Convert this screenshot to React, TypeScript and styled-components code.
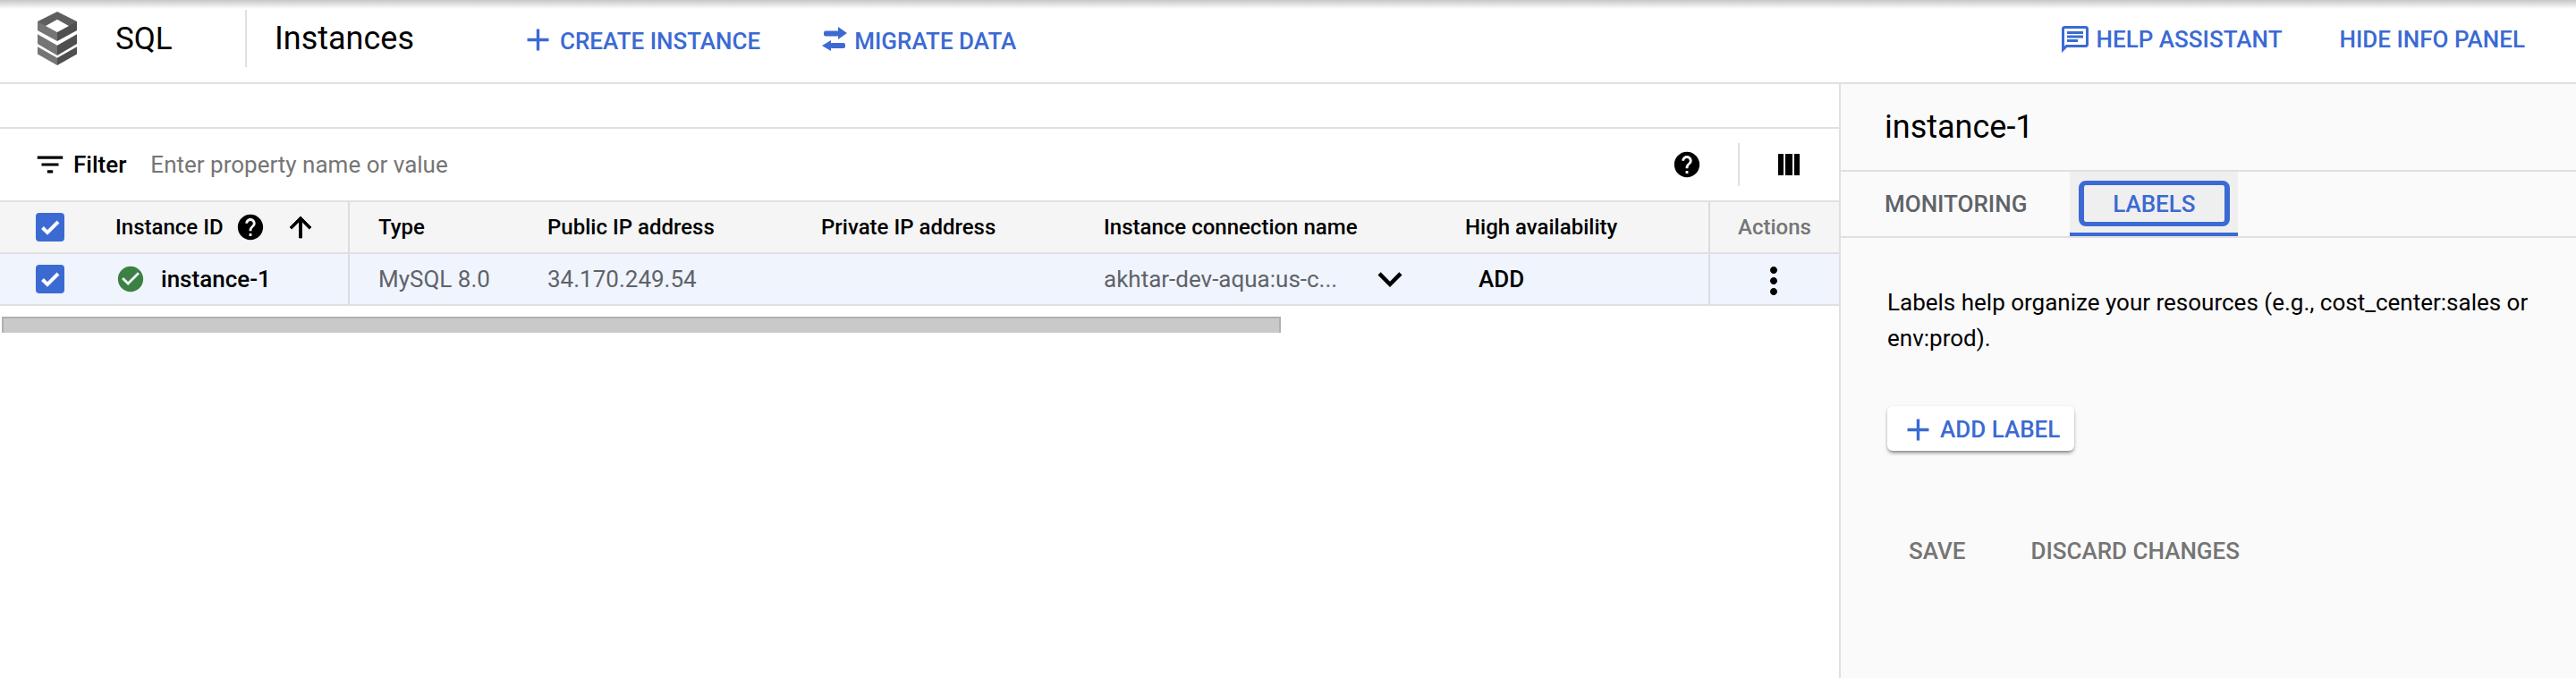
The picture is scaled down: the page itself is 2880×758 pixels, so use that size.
import React from 'react';
import styled, { createGlobalStyle } from 'styled-components';

const GlobalStyle = createGlobalStyle`
  html, body {
    margin: 0;
    padding: 0;
    background: #fff;
    font-family: Roboto, "Liberation Sans", sans-serif;
    color: #000;
  }
  * { box-sizing: border-box; }
`;

const BLUE = '#3b6ad3';
const COLUMNS = '129px 262px 221px 306px 316px 404px 272px 146px';

const Page = styled.div`
  width: 2880px;
  height: 758px;
  display: flex;
  flex-direction: column;
  overflow: hidden;
`;

const Header = styled.header`
  height: 94px;
  flex: none;
  display: flex;
  align-items: center;
  padding: 0 57px 6px 42px;
  border-bottom: 2px solid #e0e0e0;
  background: linear-gradient(#c6c6c6, #fff 10px);
`;

const ProductName = styled.span`
  font-size: 35px;
  margin-left: 43px;
  width: 145px;
`;

const Separator = styled.span<{ $height: number; $left?: number }>`
  width: 2px;
  height: ${p => p.$height}px;
  margin-left: ${p => p.$left ?? 0}px;
  background: #e0e0e0;
  flex: none;
`;

const PageTitle = styled.h1`
  font-size: 36px;
  font-weight: 400;
  margin: 0 0 0 31px;
  width: 274px;
`;

const ActionLink = styled.a<{ $gap?: number; $drop?: number }>`
  display: flex;
  align-items: center;
  gap: ${p => p.$gap ?? 0}px;
  color: ${BLUE};
  font-size: 26px;
  font-weight: 500;
  white-space: nowrap;
  & > span {
    padding-top: ${p => p.$drop ?? 0}px;
  }
`;

const HeaderActions = styled.div`
  display: flex;
  align-items: center;
  gap: 68px;
  margin-top: 2px;
`;

const HeaderEnd = styled.div`
  margin-left: auto;
  margin-top: 2px;
  display: flex;
  align-items: center;
  gap: 64px;
`;

const Main = styled.div`
  flex: 1;
  display: flex;
  min-height: 0;
`;

const ListPane = styled.section`
  width: 2056px;
  flex: none;
`;

const BlankStrip = styled.div`
  height: 50px;
  border-bottom: 2px solid #e0e0e0;
`;

const Toolbar = styled.div`
  height: 80px;
  display: flex;
  align-items: center;
  padding: 0 44px 0 37px;
`;

const FilterLabel = styled.span`
  font-size: 26px;
  font-weight: 500;
  margin-left: 7px;
`;

const FilterInput = styled.span`
  font-size: 26px;
  color: #757575;
  margin-left: 27px;
`;

const ToolbarEnd = styled.div`
  margin-left: auto;
  display: flex;
  align-items: center;
`;

const TableRow = styled.div<{ $head?: boolean }>`
  display: grid;
  grid-template-columns: ${COLUMNS};
  height: ${p => (p.$head ? 60 : 58)}px;
  background: ${p => (p.$head ? '#f5f5f5' : '#f0f4fd')};
  border-bottom: 2px solid #e0e0e0;
  border-top: ${p => (p.$head ? '2px solid #e0e0e0' : 'none')};
`;

const Cell = styled.div<{ $divider?: 'left' | 'right'; $muted?: boolean; $pad?: number }>`
  display: flex;
  align-items: center;
  min-width: 0;
  padding-left: ${p => p.$pad ?? 0}px;
  font-size: 26px;
  color: ${p => (p.$muted ? '#5f6368' : '#000')};
  white-space: nowrap;
  border-right: ${p => (p.$divider === 'right' ? '2px solid #d9dce3' : 'none')};
  border-left: ${p => (p.$divider === 'left' ? '2px solid #d9dce3' : 'none')};
`;

const HeadLabel = styled.span<{ $muted?: boolean }>`
  font-size: 24px;
  font-weight: 500;
  color: ${p => (p.$muted ? '#757575' : '#000')};
`;

const CheckBox = styled.span`
  width: 32px;
  height: 32px;
  margin-left: 40px;
  border-radius: 4px;
  background: ${BLUE};
  display: flex;
  align-items: center;
  justify-content: center;
`;

const InstanceName = styled.span`
  font-size: 26px;
  font-weight: 500;
  margin-left: 17px;
`;

const AddHa = styled.span`
  font-size: 26px;
  font-weight: 500;
  margin-left: 15px;
`;

const ConnectionName = styled.span`
  width: 293px;
`;

const ScrollBar = styled.div`
  width: 1430px;
  height: 18px;
  margin: 12px 0 0 2px;
  background: #c9c9c9;
  border: 2px solid #b0b0b0;
  border-bottom: none;
`;

const InfoPane = styled.aside`
  flex: 1;
  background: #fafafa;
  border-left: 2px solid #e0e0e0;
`;

const InfoTitle = styled.h2`
  height: 98px;
  margin: 0;
  padding-left: 49px;
  display: flex;
  align-items: center;
  font-size: 36px;
  font-weight: 400;
  border-bottom: 2px solid #e0e0e0;
`;

const Tabs = styled.div`
  height: 74px;
  display: flex;
  padding-left: 49px;
  border-bottom: 2px solid #e0e0e0;
`;

const Tab = styled.div`
  display: flex;
  align-items: center;
  font-size: 26px;
  font-weight: 500;
  color: #5f6368;
`;

const ActiveTab = styled.div`
  width: 188px;
  margin-left: 48px;
  padding-top: 10px;
  display: flex;
  justify-content: center;
  align-items: flex-start;
  background: #efefef;
  border-bottom: 4px solid ${BLUE};
  font-size: 26px;
  font-weight: 500;
  color: ${BLUE};
`;

const FocusRing = styled.span`
  width: 169px;
  height: 51px;
  border: solid ${BLUE};
  border-width: 5px 6px;
  border-radius: 8px;
  display: flex;
  align-items: center;
  justify-content: center;
`;

const InfoBody = styled.div`
  padding: 52px 40px 0 52px;
`;

const Description = styled.p`
  margin: 0;
  font-size: 26px;
  line-height: 40px;
`;

const RaisedButton = styled.button`
  width: 209px;
  height: 50px;
  margin-top: 56px;
  padding: 2px 0 0 14px;
  display: flex;
  align-items: center;
  gap: 4px;
  border: none;
  border-radius: 6px;
  background: #fff;
  color: ${BLUE};
  font: 500 26px Roboto, sans-serif;
  box-shadow: 0 3px 4px -1px rgba(0, 0, 0, 0.5), 0 0 3px rgba(0, 0, 0, 0.06);
`;

const FormActions = styled.div`
  display: flex;
  gap: 73px;
  margin-top: 92px;
  padding-left: 24px;
  line-height: 40px;
`;

const FlatButton = styled.span`
  font-size: 26px;
  font-weight: 500;
  color: #757575;
`;

const Glyph = styled.svg<{ $left?: number; $top?: number }>`
  display: block;
  flex: none;
  margin-left: ${p => p.$left ?? 0}px;
  margin-top: ${p => p.$top ?? 0}px;
`;

interface IconProps {
  d: string;
  size: number;
  color?: string;
  left?: number;
  top?: number;
  stroke?: number;
}

const Icon: React.FC<IconProps> = ({ d, size, color = '#000', left, top, stroke }) => (
  <Glyph
    $left={left}
    $top={top}
    width={size}
    height={size}
    viewBox="0 0 24 24"
    fill={color}
    stroke={stroke ? color : undefined}
    strokeWidth={stroke}
  >
    <path d={d} />
  </Glyph>
);

const PLUS = 'M19 13h-6v6h-2v-6H5v-2h6V5h2v6h6v2z';
const CHAT =
  'M20 2H4c-1.1 0-1.99.9-1.99 2L2 22l4-4h14c1.1 0 2-.9 2-2V4c0-1.1-.9-2-2-2zm0 14H5.17L4 17.17V4h16v12zM6 12h8v2H6zm0-3h12v2H6zm0-3h12v2H6z';
const FILTER = 'M10 18h4v-2h-4v2zM3 6v2h18V6H3zm3 7h12v-2H6v2z';
const HELP =
  'M12 2C6.48 2 2 6.48 2 12s4.48 10 10 10 10-4.48 10-10S17.52 2 12 2zm1 17h-2v-2h2v2zm2.07-7.75l-.9.92C13.45 12.9 13 13.5 13 15h-2v-.5c0-1.1.45-2.1 1.17-2.83l1.24-1.26c.37-.36.59-.86.59-1.41 0-1.1-.9-2-2-2s-2 .9-2 2H8c0-2.21 1.79-4 4-4s4 1.79 4 4c0 .88-.36 1.68-.93 2.25z';
const ARROW_UP = 'M4 12l1.41 1.41L11 7.83V20h2V7.83l5.58 5.59L20 12l-8-8-8 8z';
const CHECK_CIRCLE =
  'M12 2C6.48 2 2 6.48 2 12s4.48 10 10 10 10-4.48 10-10S17.52 2 12 2zm-2 15l-5-5 1.41-1.41L10 14.17l7.59-7.59L19 8l-9 9z';
const CHEVRON = 'M16.59 8.59L12 13.17 7.41 8.59 6 10l6 6 6-6z';
const KEBAB =
  'M12 8c1.1 0 2-.9 2-2s-.9-2-2-2-2 .9-2 2 .9 2 2 2zm0 2c-1.1 0-2 .9-2 2s.9 2 2 2 2-.9 2-2-.9-2-2-2zm0 6c-1.1 0-2 .9-2 2s.9 2 2 2 2-.9 2-2-.9-2-2-2z';

const Logo = () => (
  <Glyph width="44" height="60" viewBox="0 0 44 60">
    <path d="M22 0L44 11V15L35 16L22 8.7L9 16L0 15V11Z" fill="#5e5e5e" />
    <path d="M0 11L9 16L22 23V33L0 21Z" fill="#757575" />
    <path d="M44 11L35 16L22 23V33L44 21Z" fill="#4f4f4f" />
    <path d="M0 25.3L22 37.7V49L0 36Z" fill="#757575" />
    <path d="M44 25.3L22 37.7V49L44 36Z" fill="#4f4f4f" />
    <path d="M0 39.3L22 51.7V60L0 47.6Z" fill="#757575" />
    <path d="M44 39.3L22 51.7V60L44 47.6Z" fill="#4f4f4f" />
  </Glyph>
);

const SwapIcon = () => (
  <Glyph width="30" height="28" viewBox="0 0 30 28" fill={BLUE}>
    <rect x="3" y="4.5" width="17" height="6" rx="2" />
    <path d="M19 0L29 7L19 14Z" />
    <path d="M1 21L11 15V27Z" />
    <rect x="10" y="18" width="17" height="6" rx="2" />
  </Glyph>
);

const ColumnsIcon = () => (
  <Glyph $left={43} width="24" height="24" viewBox="0 0 24 24" fill="#000">
    <rect x="0" width="6" height="24" />
    <rect x="8" width="8" height="24" />
    <rect x="18" width="6" height="24" />
  </Glyph>
);

const Tick = () => (
  <svg width="22" height="22" viewBox="0 0 22 22" fill="none" stroke="#fff" strokeWidth="4">
    <path d="M2.5 11.5L8 17L20 5" />
  </svg>
);

export default function App() {
  return (
    <Page>
      <GlobalStyle />
      <Header>
        <Logo />
        <ProductName>SQL</ProductName>
        <Separator $height={64} />
        <PageTitle>Instances</PageTitle>
        <HeaderActions>
          <ActionLink $gap={4} $drop={3}>
            <Icon d={PLUS} size={41} color={BLUE} />
            <span>CREATE INSTANCE</span>
          </ActionLink>
          <ActionLink $gap={7} $drop={3}>
            <SwapIcon />
            <span>MIGRATE DATA</span>
          </ActionLink>
        </HeaderActions>
        <HeaderEnd>
          <ActionLink $gap={6}>
            <Icon d={CHAT} size={36} color={BLUE} />
            <span>HELP ASSISTANT</span>
          </ActionLink>
          <ActionLink>
            <span>HIDE INFO PANEL</span>
          </ActionLink>
        </HeaderEnd>
      </Header>
      <Main>
        <ListPane>
          <BlankStrip />
          <Toolbar>
            <Icon d={FILTER} size={38} />
            <FilterLabel>Filter</FilterLabel>
            <FilterInput>Enter property name or value</FilterInput>
            <ToolbarEnd>
              <Icon d={HELP} size={34} />
              <Separator $height={48} $left={40} />
              <ColumnsIcon />
            </ToolbarEnd>
          </Toolbar>
          <TableRow $head>
            <Cell>
              <CheckBox><Tick /></CheckBox>
            </Cell>
            <Cell $divider="right">
              <HeadLabel>Instance ID</HeadLabel>
              <Icon d={HELP} size={34} left={13} />
              <Icon d={ARROW_UP} size={36} left={21} stroke={0.6} />
            </Cell>
            <Cell $pad={32}><HeadLabel>Type</HeadLabel></Cell>
            <Cell><HeadLabel>Public IP address</HeadLabel></Cell>
            <Cell><HeadLabel>Private IP address</HeadLabel></Cell>
            <Cell><HeadLabel>Instance connection name</HeadLabel></Cell>
            <Cell><HeadLabel>High availability</HeadLabel></Cell>
            <Cell $divider="left" $pad={31}><HeadLabel $muted>Actions</HeadLabel></Cell>
          </TableRow>
          <TableRow>
            <Cell>
              <CheckBox><Tick /></CheckBox>
            </Cell>
            <Cell $divider="right">
              <Icon d={CHECK_CIRCLE} size={34} color="#3c8043" />
              <InstanceName>instance-1</InstanceName>
            </Cell>
            <Cell $pad={32} $muted>MySQL 8.0</Cell>
            <Cell $muted>34.170.249.54</Cell>
            <Cell />
            <Cell $muted>
              <ConnectionName>akhtar-dev-aqua:us-c...</ConnectionName>
              <Icon d={CHEVRON} size={54} />
            </Cell>
            <Cell><AddHa>ADD</AddHa></Cell>
            <Cell $divider="left" $pad={47}><Icon d={KEBAB} size={48} top={4} /></Cell>
          </TableRow>
          <ScrollBar />
        </ListPane>
        <InfoPane>
          <InfoTitle>instance-1</InfoTitle>
          <Tabs>
            <Tab>MONITORING</Tab>
            <ActiveTab>
              <FocusRing>LABELS</FocusRing>
            </ActiveTab>
          </Tabs>
          <InfoBody>
            <Description>Labels help organize your resources (e.g., cost_center:sales or env:prod).</Description>
            <RaisedButton>
              <Icon d={PLUS} size={41} color={BLUE} />
              ADD LABEL
            </RaisedButton>
            <FormActions>
              <FlatButton>SAVE</FlatButton>
              <FlatButton>DISCARD CHANGES</FlatButton>
            </FormActions>
          </InfoBody>
        </InfoPane>
      </Main>
    </Page>
  );
}
